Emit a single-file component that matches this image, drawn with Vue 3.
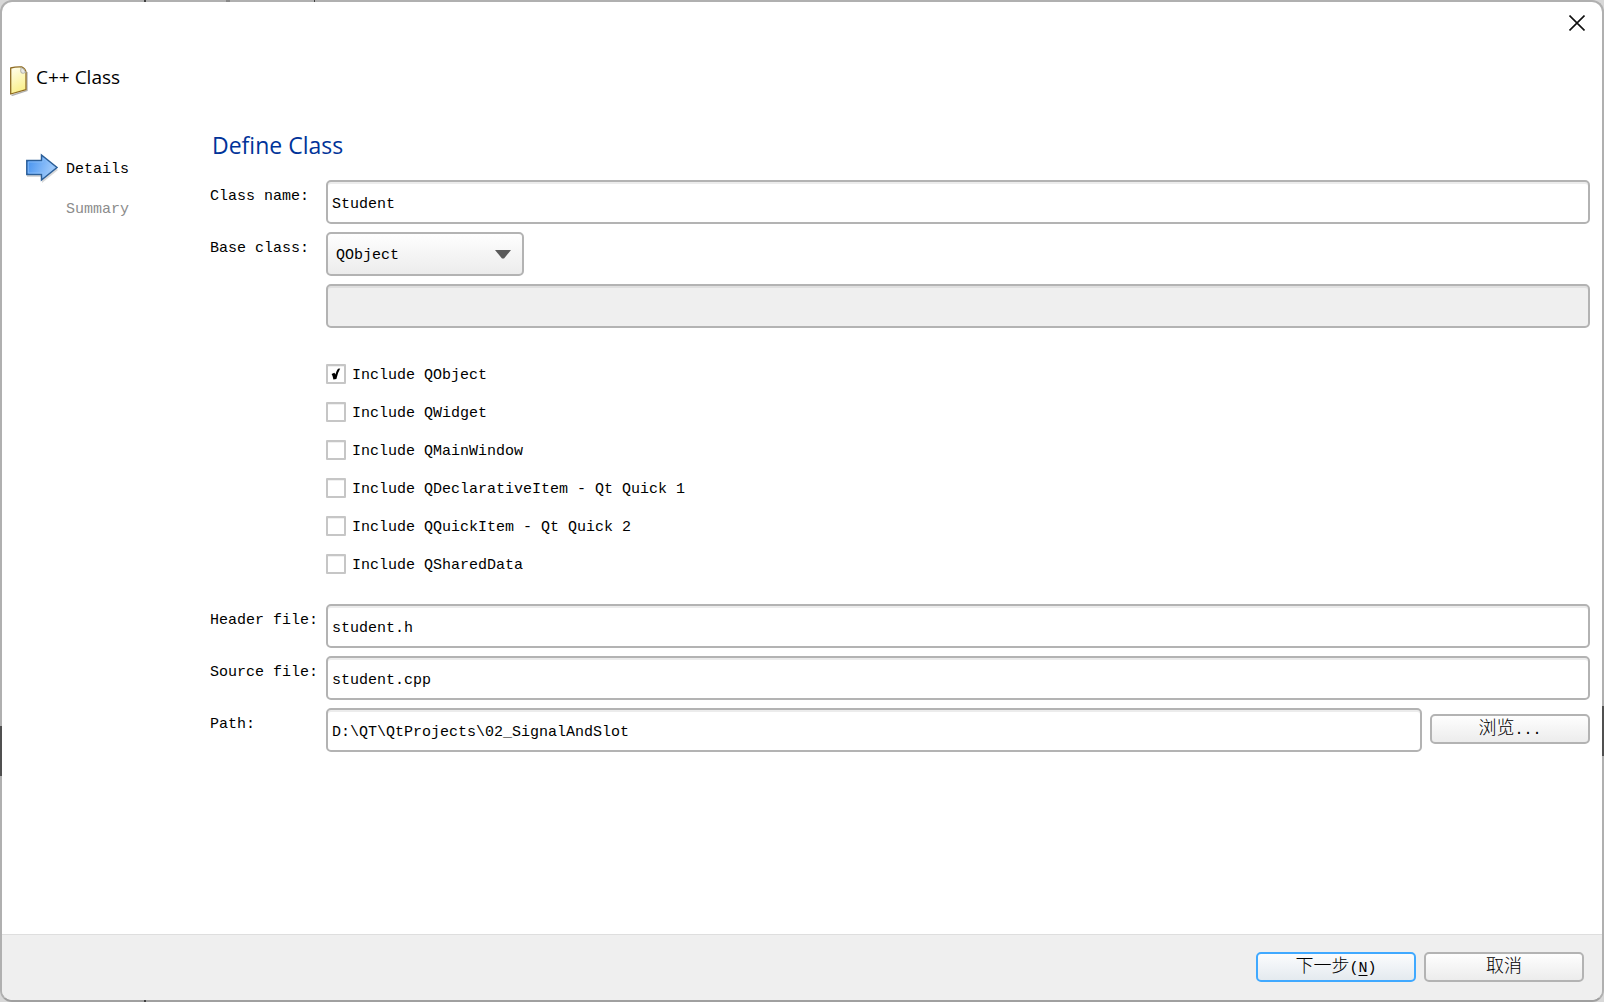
<script setup>
import { ref, reactive } from 'vue'

const form = reactive({
  name: 'Student',
  base: 'QObject',
  custom: '',
  header: 'student.h',
  source: 'student.cpp',
  path: 'D:\\QT\\QtProjects\\02_SignalAndSlot'
})

const includes = ref([
  { id: 'qobject', label: 'Include QObject', on: true },
  { id: 'qwidget', label: 'Include QWidget', on: false },
  { id: 'qmainwindow', label: 'Include QMainWindow', on: false },
  { id: 'qdeclarative', label: 'Include QDeclarativeItem - Qt Quick 1', on: false },
  { id: 'qquickitem', label: 'Include QQuickItem - Qt Quick 2', on: false },
  { id: 'qshareddata', label: 'Include QSharedData', on: false }
])
</script>

<template>
  <div class="backdrop">
    <main class="dialog">
      <div class="titlebar">
        <button class="close" type="button" aria-label="Close">
          <svg width="16" height="16" viewBox="0 0 16 16" fill="none" stroke="#111" stroke-width="1.6">
            <path d="M0.5 0.5 L15.5 15.5 M15.5 0.5 L0.5 15.5" />
          </svg>
        </button>
      </div>

      <header class="heading">
        <svg class="file-icon" width="18" height="30" viewBox="0 0 18 30">
          <defs>
            <linearGradient id="paper" x1="0" y1="0" x2="0.3" y2="1">
              <stop offset="0" stop-color="#fffef0" />
              <stop offset="1" stop-color="#faf08c" />
            </linearGradient>
          </defs>
          <path d="M1.5 29 L2.5 29.2 L17 24.6 V6" fill="none" stroke="#000" stroke-opacity=".3" stroke-width="1.4" />
          <path d="M0.7 2 Q6 0.6 12 1 Q15.4 2.6 16 6 V23.6 L0.7 28 Z" fill="url(#paper)" stroke="#8f6c22" stroke-width="1.3" stroke-linejoin="round" />
          <path d="M11.2 1.4 Q10 5.6 11.4 7 Q13.2 7.8 15.6 6.4 Q14.6 3 11.2 1.4 Z" fill="#e8e8e4" stroke="#a2a29c" stroke-width="0.8" />
        </svg>
        <h1>C++ Class</h1>
      </header>

      <div class="body">
        <ol class="steps">
          <li class="current">
            <svg width="34" height="30" viewBox="0 0 34 30">
              <defs>
                <linearGradient id="arrow" x1="0" y1="0" x2="1" y2="0.3">
                  <stop offset="0" stop-color="#3f8ff0" />
                  <stop offset="1" stop-color="#a5cdfb" />
                </linearGradient>
              </defs>
              <path d="M1 9 H16 V3 L32 17 L16 30 V24 H1 Z" fill="#000" fill-opacity=".15" />
              <path d="M0.8 7.5 H15.5 V2 L31 14.5 L15.5 27 V21.5 H0.8 Z" fill="url(#arrow)" stroke="#2c5f98" stroke-width="1.5" />
              <path d="M2.3 9 H17 V5.2 L28.5 14.5 L17 23.8 V20 H2.3 Z" fill="none" stroke="#8fc0f8" stroke-opacity=".7" />
            </svg>
            <span>Details</span>
          </li>
          <li class="pending"><span>Summary</span></li>
        </ol>

        <form class="page" @submit.prevent>
          <h2>Define Class</h2>

          <div class="row">
            <label for="name">Class name:</label>
            <input id="name" v-model="form.name" class="field" type="text">
          </div>
          <div class="row">
            <label for="base">Base class:</label>
            <div class="combo">
              <select id="base" v-model="form.base">
                <option>QObject</option>
                <option>QWidget</option>
                <option>QMainWindow</option>
              </select>
              <svg width="16" height="9" viewBox="0 0 16 9"><path d="M0 0 H16 L9 8.5 H7 Z" fill="#5a5a5a" /></svg>
            </div>
          </div>
          <div class="row">
            <span></span>
            <input v-model="form.custom" class="field" type="text" aria-label="Custom base class" disabled>
          </div>

          <div class="checks">
            <label v-for="item in includes" :key="item.id" class="check" :for="item.id">
              <input :id="item.id" v-model="item.on" type="checkbox">
              <svg v-if="item.on" width="20" height="20" viewBox="0 0 20 20">
                <path d="M5.6 10 L8.4 8.8 L9.4 10.6 Q10.2 7 12 4.8 L14.2 4.6 Q11.6 9 10.4 15 L7.4 15.6 Q7 12 5.6 10 Z" fill="#000" />
              </svg>
              <span>{{ item.label }}</span>
            </label>
          </div>

          <div class="row">
            <label for="header">Header file:</label>
            <input id="header" v-model="form.header" class="field" type="text">
          </div>
          <div class="row">
            <label for="source">Source file:</label>
            <input id="source" v-model="form.source" class="field" type="text">
          </div>
          <div class="row">
            <label for="path">Path:</label>
            <div class="path">
              <input id="path" v-model="form.path" class="field" type="text">
              <button class="push" type="button"><span class="caption"><span class="han">浏览</span>...</span></button>
            </div>
          </div>
        </form>
      </div>

      <footer class="footer">
        <button class="push primary" type="button"><span class="caption"><span class="han">下一步</span>(<u>N</u>)</span></button>
        <button class="push" type="button"><span class="caption"><span class="han">取消</span></span></button>
      </footer>
    </main>
  </div>
</template>

<style>
body {
  margin: 0;
}
</style>

<style scoped>
* {
  box-sizing: border-box;
}

.backdrop {
  position: relative;
  min-height: 100vh;
  display: flex;
  background: #d8d8d8;
}

/* Parts of the windows behind that show through the dialog's border */
.backdrop::after {
  content: "";
  position: absolute;
  inset: 0;
  pointer-events: none;
  background:
    linear-gradient(#505050, #505050) 0 726px / 2px 50px no-repeat,
    linear-gradient(#505050, #505050) 100% 706px / 2px 50px no-repeat,
    linear-gradient(#404040, #404040) 144px 0 / 2px 2px no-repeat,
    linear-gradient(#888, #888) 226px 0 / 4px 2px no-repeat,
    linear-gradient(#404040, #404040) 314px 0 / 1px 2px no-repeat,
    linear-gradient(#404040, #404040) 144px 100% / 2px 2px no-repeat;
}

.dialog,
.dialog input,
.dialog select,
.dialog button {
  font-family: "Liberation Mono", "Noto Sans CJK SC", monospace;
  font-size: 15px;
  color: #000;
}

.dialog {
  flex: 1;
  display: flex;
  flex-direction: column;
  border: 2px solid #b0b0b0;
  border-bottom-color: #a0a0a0;
  border-radius: 12px;
  background: #fff;
  overflow: hidden;
}

.titlebar {
  display: flex;
  justify-content: flex-end;
  height: 60px;
}

.close {
  display: flex;
  align-items: center;
  justify-content: center;
  width: 50px;
  height: 42px;
  padding: 0;
  border: 0;
  background: none;
}

.heading {
  display: flex;
  align-items: flex-start;
  gap: 8px;
  height: 64px;
  padding: 4px 8px;
}

h1,
h2 {
  margin: 0;
  font-family: "Open Sans", sans-serif;
  font-weight: 400;
}

h1 {
  font-size: 19px;
  line-height: 22px;
}

h2 {
  height: 54px;
  padding-left: 2px;
  font-size: 23px;
  line-height: 38px;
  color: #003399;
}

.body {
  flex: 1;
  display: flex;
}

.steps {
  width: 208px;
  margin: 0;
  padding: 22px 0 0 24px;
  list-style: none;
}

.steps li {
  display: flex;
  align-items: center;
  gap: 6px;
  height: 40px;
}

.steps span,
.check span {
  padding-top: 2px;
}

.pending {
  padding-left: 40px;
  color: #8c8c8c;
}

.page {
  flex: 1;
  padding-right: 12px;
}

.row {
  display: grid;
  grid-template-columns: 116px 1fr;
  margin-bottom: 8px;
}

.row > label {
  padding-top: 5px;
  line-height: 24px;
}

.field {
  width: 100%;
  min-width: 0;
  height: 44px;
  padding: 4px 4px 0;
  border: 2px solid #b3b3b3;
  border-radius: 5px;
  background: #fff;
  box-shadow: inset 0 2px #ececec;
  outline: 0;
}

.field:disabled {
  background: #efefef;
  box-shadow: inset 0 2px #dfdfdf;
}

.combo {
  display: grid;
  grid-template-columns: 198px;
  align-items: center;
}

.combo > * {
  grid-area: 1 / 1;
}

.combo select {
  height: 44px;
  padding: 2px 8px 0;
  border: 2px solid #b3b3b3;
  border-radius: 5px;
  background: linear-gradient(#fefefe, #ececec);
  appearance: none;
}

.combo svg {
  justify-self: end;
  margin-right: 13px;
  pointer-events: none;
}

.checks {
  display: flex;
  flex-direction: column;
  padding: 19px 0 21px 116px;
}

.check {
  display: grid;
  grid-template-columns: 20px 1fr;
  column-gap: 6px;
  align-items: center;
  height: 38px;
}

.check input,
.check svg {
  grid-area: 1 / 1;
}

.check svg {
  pointer-events: none;
}

.check input {
  width: 20px;
  height: 20px;
  margin: 0;
  border: 2px solid #c6c6c6;
  border-radius: 1px;
  background: #fff;
  box-shadow: inset 0 1px #f0f0f0;
  appearance: none;
}

.path {
  display: flex;
  gap: 8px;
}

.push {
  flex: none;
  display: flex;
  align-items: center;
  justify-content: center;
  width: 160px;
  height: 30px;
  padding: 0;
  border: 2px solid #b3b3b3;
  border-radius: 5px;
  background: linear-gradient(#fefefe, #ececec);
}

.path .push {
  margin-top: 6px;
}

.primary {
  border-color: #40a9ff;
  background: linear-gradient(#fbfcfd, #e4eaef);
}

.caption {
  line-height: 24px;
  padding-bottom: 2px;
}

.han {
  font-family: "Noto Sans CJK SC", sans-serif;
  font-size: 18px;
  font-weight: 300;
  line-height: 24px;
}

.push u {
  text-underline-offset: 3px;
}

.footer {
  display: flex;
  justify-content: flex-end;
  gap: 8px;
  height: 66px;
  padding: 17px 18px 0;
  border-top: 1px solid #dedede;
  background: #efefef;
}
</style>
